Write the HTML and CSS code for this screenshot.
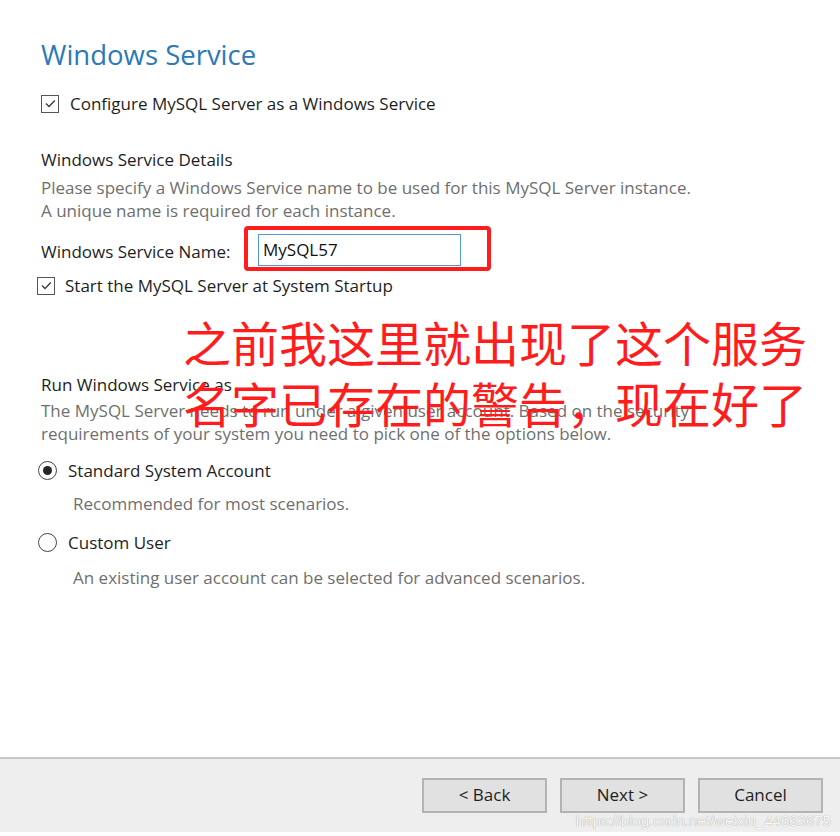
FILE: index.html
```html
<!DOCTYPE html>
<html lang="zh-CN">
<head>
<meta charset="utf-8">
<title>Windows Service</title>
<link rel="stylesheet" href="styles.css">
</head>
<body>
<div class="page">
  <main class="content">
    <h1 class="title">Windows Service</h1>

    <label class="check check-first">
      <span class="box"><svg viewBox="0 0 18 18" width="18" height="18"><path d="M3.6 9 L7.2 12.6 L14.2 5.4" fill="none" stroke="#3a3a3a" stroke-width="1.6"/></svg></span>
      <span class="check-text">Configure MySQL Server as a Windows Service</span>
    </label>

    <h2 class="section-head section-details">Windows Service Details</h2>
    <p class="desc">Please specify a Windows Service name to be used for this MySQL Server instance.<br>A unique name is required for each instance.</p>

    <div class="name-row">
      <span class="name-label">Windows Service Name:</span>
      <span class="input-wrap">
        <span class="input">MySQL57</span>
        <span class="highlight"></span>
      </span>
    </div>

    <label class="check check-startup">
      <span class="box"><svg viewBox="0 0 18 18" width="18" height="18"><path d="M3.6 9 L7.2 12.6 L14.2 5.4" fill="none" stroke="#3a3a3a" stroke-width="1.6"/></svg></span>
      <span class="check-text">Start the MySQL Server at System Startup</span>
    </label>

    <h2 class="section-head section-run">Run Windows Service as ...</h2>
    <p class="desc desc-run">The MySQL Server needs to run under a given user account. Based on the security<br>requirements of your system you need to pick one of the options below.</p>

    <label class="radio radio-first">
      <span class="circle checked"></span>
      <span class="radio-text">Standard System Account</span>
    </label>
    <p class="sub sub-first">Recommended for most scenarios.</p>

    <label class="radio radio-second">
      <span class="circle"></span>
      <span class="radio-text">Custom User</span>
    </label>
    <p class="sub sub-second">An existing user account can be selected for advanced scenarios.</p>

    <div class="annotation">之前我这里就出现了这个服务<br>名字已存在的警告，现在好了</div>
  </main>

  <footer class="footer">
    <button class="btn">&lt; Back</button>
    <button class="btn">Next &gt;</button>
    <button class="btn">Cancel</button>
    <span class="watermark">https://blog.csdn.net/weixin_44663675</span>
  </footer>
  <div class="bottom-strip"></div>
</div>
</body>
</html>
```

FILE: styles.css
```css
* { box-sizing: border-box; }

html, body {
  margin: 0;
  padding: 0;
  background: #ffffff;
}

body {
  font-family: "Open Sans", "Noto Sans", "Liberation Sans", sans-serif;
  font-size: 17px;
  color: #1e1e1e;
}

.page {
  width: 840px;
  height: 836px;
  display: flex;
  flex-direction: column;
  overflow: hidden;
}

.content {
  position: relative;
  flex: 1;
  padding: 38px 0 0 41px;
}

.title {
  margin: 0;
  font-size: 27.5px;
  font-weight: 400;
  line-height: 34px;
  color: #2b79b7;
}

.check {
  display: flex;
  align-items: center;
  height: 23px;
  line-height: 23px;
}

.check-first {
  margin-top: 20px;
}

.check-startup {
  margin-top: 8px;
  margin-left: -4px;
}

.check-first .check-text { margin-left: 11px; }
.check-startup .check-text { margin-left: 10px; }

.box {
  width: 18px;
  height: 18px;
  border: 1.5px solid #555555;
  display: flex;
  align-items: center;
  justify-content: center;
  flex: none;
}

.box svg {
  width: 15px;
  height: 15px;
}

.section-head {
  margin: 0;
  font-size: 17px;
  font-weight: 400;
  line-height: 23px;
  color: #1e1e1e;
}

.section-details { margin-top: 33px; }
.section-run { margin-top: 76px; }

.desc {
  margin: 5px 0 0;
  line-height: 23px;
  color: #6f6f6f;
}

.desc-run { margin-top: 3px; }

.name-row {
  display: flex;
  align-items: center;
  margin-top: 12px;
  height: 32px;
}

.name-label {
  width: 217px;
  padding-top: 2px;
}

.input-wrap {
  position: relative;
  display: block;
}

.input {
  display: flex;
  align-items: center;
  width: 203px;
  height: 32px;
  padding: 0 0 2px 4px;
  border: 1px solid #4c9ad8;
  background: #ffffff;
  color: #111;
}

.highlight {
  position: absolute;
  left: -14px;
  top: -8px;
  width: 247px;
  height: 45px;
  border: 4px solid #ff1c1c;
  border-radius: 4px;
}

.radio {
  display: flex;
  align-items: center;
  height: 23px;
  line-height: 23px;
  margin-left: -3px;
}

.radio-first { margin-top: 14px; }
.radio-second { margin-top: 16px; }

.circle {
  width: 19px;
  height: 19px;
  border: 1.5px solid #444;
  border-radius: 50%;
  display: flex;
  align-items: center;
  justify-content: center;
  flex: none;
}

.circle.checked::after {
  content: "";
  width: 9px;
  height: 9px;
  border-radius: 50%;
  background: #262626;
}

.radio-text { margin-left: 11px; }

.sub {
  margin: 10px 0 0 32px;
  line-height: 23px;
  color: #6f6f6f;
}

.sub-second { margin-top: 12px; }

.annotation {
  position: absolute;
  left: 183px;
  top: 311px;
  font-family: "Noto Sans CJK SC", sans-serif;
  font-size: 48px;
  line-height: 61px;
  color: #ff1c1c;
  white-space: nowrap;
}

.footer {
  position: relative;
  height: 75px;
  flex: none;
  background: #eeeeee;
  border-top: 2px solid #c9c9c9;
  display: flex;
  justify-content: flex-end;
  align-items: flex-start;
  gap: 13px;
  padding: 19px 17px 0 0;
}

.btn {
  width: 125px;
  height: 35px;
  background: #e1e1e1;
  border: 2px solid #b3b3b3;
  font-family: inherit;
  font-size: 17px;
  color: #1e1e1e;
  padding: 0 0 2px;
}

.watermark {
  position: absolute;
  right: 9px;
  bottom: 3px;
  font-family: "Liberation Sans", Arial, sans-serif;
  font-size: 15px;
  color: rgba(255, 255, 255, 0.95);
  text-shadow: 0 0 1px rgba(110, 110, 110, 0.8);
  white-space: nowrap;
}

.bottom-strip {
  height: 4px;
  flex: none;
  background: #ffffff;
}
```
